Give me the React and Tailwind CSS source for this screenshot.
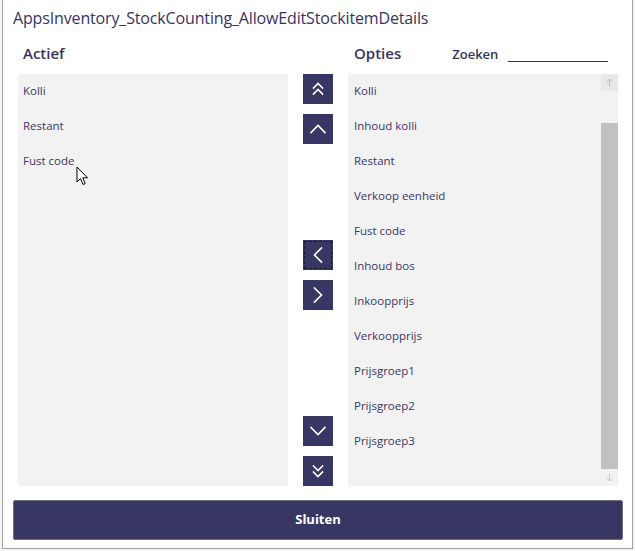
import React from 'react';

const actief = ['Kolli', 'Restant', 'Fust code'];
const opties = [
  'Kolli',
  'Inhoud kolli',
  'Restant',
  'Verkoop eenheid',
  'Fust code',
  'Inhoud bos',
  'Inkoopprijs',
  'Verkoopprijs',
  'Prijsgroep1',
  'Prijsgroep2',
  'Prijsgroep3',
];

const Chevron = ({ dir }) => {
  const paths = {
    up: 'M8 18.5 L15 11.5 L22 18.5',
    down: 'M8 11.5 L15 18.5 L22 11.5',
    left: 'M18.5 8 L11.5 15 L18.5 22',
    right: 'M11.5 8 L18.5 15 L11.5 22',
    top: 'M10.5 14 L15 9.5 L19.5 14 M10.5 20 L15 15.5 L19.5 20',
    bottom: 'M10.5 10 L15 14.5 L19.5 10 M10.5 16 L15 20.5 L19.5 16',
  };
  return (
    <svg width="30" height="30" viewBox="0 0 30 30" fill="none">
      <path d={paths[dir]} stroke="white" strokeWidth="1.6" strokeLinecap="square" strokeLinejoin="miter" />
    </svg>
  );
};

const MoveButton = ({ dir, focused }) => (
  <button
    className={`w-[30px] h-[30px] bg-[#383663] flex items-center justify-center ${
      focused ? 'outline-1 outline-dashed outline-offset-[-2px] outline-[#1c1b30]' : ''
    }`}
  >
    <Chevron dir={dir} />
  </button>
);

const Cursor = () => (
  <svg className="absolute left-[73px] top-[166px]" width="14" height="21" viewBox="0 0 14 21">
    <path
      d="M1 1 L1 16 L4.5 12.5 L7 18.5 L9.2 17.5 L6.8 11.8 L11.5 11.8 Z"
      fill="white"
      stroke="black"
      strokeWidth="1"
      strokeLinejoin="round"
    />
  </svg>
);

export default function App() {
  return (
    <div
      className="w-[635px] h-[551px] bg-[#f4f4f4] overflow-hidden"
      style={{ fontFamily: '"Open Sans", "Noto Sans", sans-serif' }}
    >
      <div className="relative ml-[2px] w-[631px] h-[549px] bg-white border-x border-b border-[#a3a3a3] flex flex-col pl-[10px]">
        <h1 className="mt-[7px] h-[22px] text-[16px] leading-[22px] text-[#36345f] tracking-[-0.15px]">
          AppsInventory_StockCounting_AllowEditStockitemDetails
        </h1>

        <div className="mt-[8px] flex">
          <div className="ml-[5px] w-[270px] flex flex-col">
            <div className="h-[36px] pl-[5px] flex items-start">
              <span className="mt-[7px] text-[15px] leading-[18px] font-semibold text-[#36345f]">Actief</span>
            </div>
            <div className="mt-[1px] h-[412px] bg-[#f2f2f2] flex flex-col">
              {actief.map((item) => (
                <div key={item} className="h-[35px] pl-[5px] pb-[1px] flex items-center text-[11.5px] text-[#3a3866]">
                  {item}
                </div>
              ))}
            </div>
          </div>

          <div className="ml-[15px] w-[30px] pt-[37px] flex flex-col">
            <MoveButton dir="top" />
            <div className="mt-[10px]">
              <MoveButton dir="up" />
            </div>
            <div className="mt-[96px]">
              <MoveButton dir="left" focused />
            </div>
            <div className="mt-[10px]">
              <MoveButton dir="right" />
            </div>
            <div className="mt-[106px]">
              <MoveButton dir="down" />
            </div>
            <div className="mt-[10px]">
              <MoveButton dir="bottom" />
            </div>
          </div>

          <div className="ml-[15px] w-[270px] flex flex-col">
            <div className="h-[36px] pl-[6px] flex items-start">
              <span className="mt-[7px] text-[15px] leading-[18px] font-semibold text-[#36345f]">Opties</span>
              <span className="ml-[51px] mt-[8px] text-[13px] leading-[18px] font-semibold text-[#36345f]">Zoeken</span>
              <div className="ml-[10px] w-[100px] h-[25px] border-b border-[#36345f]" />
            </div>
            <div className="mt-[1px] h-[412px] bg-[#f2f2f2] flex">
              <div className="flex-1 flex flex-col">
                {opties.map((item) => (
                  <div key={item} className="h-[35px] pl-[6px] pb-[1px] flex items-center text-[11.5px] text-[#3a3866]">
                    {item}
                  </div>
                ))}
              </div>
              <div className="w-[17px] flex flex-col bg-[#f2f2f2]">
                <div className="h-[17px] bg-[#e8e8e8] flex items-center justify-center">
                  <svg width="9" height="9" viewBox="0 0 9 9" fill="none">
                    <path d="M4.5 8.5 V1 M1 4.5 L4.5 1 L8 4.5" stroke="#bdbdbd" strokeWidth="1" />
                  </svg>
                </div>
                <div className="h-[32px]" />
                <div className="h-[346px] bg-[#c1c1c1]" />
                <div className="h-[17px] flex items-center justify-center">
                  <svg width="9" height="9" viewBox="0 0 9 9" fill="none">
                    <path d="M4.5 0.5 V8 M1 4.5 L4.5 8 L8 4.5" stroke="#c8c8c8" strokeWidth="1" />
                  </svg>
                </div>
              </div>
            </div>
          </div>
        </div>

        <button className="mt-[14px] w-[610px] h-[40px] bg-[#383663] border border-[#6e6e80] rounded-[2px] text-white text-[13px] font-bold">
          Sluiten
        </button>

        <Cursor />
      </div>
    </div>
  );
}
